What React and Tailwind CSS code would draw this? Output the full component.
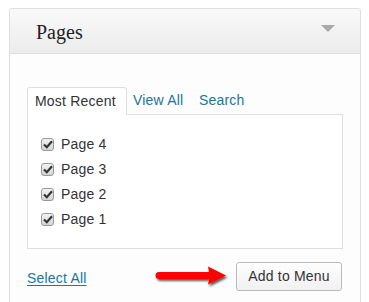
export default function App() {
  const pages = ["Page 4", "Page 3", "Page 2", "Page 1"];

  return (
    <div className="w-[369px] h-[302px] bg-white overflow-hidden pt-[8px] pl-[9px]" style={{ fontFamily: "'Liberation Sans', Arial, sans-serif" }}>
      <div className="w-[352px] h-[300px] border border-[#dfdfdf] rounded-t-[3px] bg-[#fdfdfd]">
        {/* header */}
        <div className="h-[45px] flex items-center justify-between pl-[26px] pr-[25px] border-b border-[#dfdfdf] bg-gradient-to-b from-[#f9f9f9] to-[#ececec] rounded-t-[3px]">
          <span className="text-[20px] text-[#222] pt-[2px]" style={{ fontFamily: "'Liberation Serif', Georgia, serif" }}>
            Pages
          </span>
          <svg width="14" height="8" viewBox="0 0 14 8" className="mb-[5px]">
            <polygon points="0,0 14,0 7,7" fill="#aaaaaa" />
          </svg>
        </div>

        <div className="px-[17px] pt-[32px]">
          {/* tabs */}
          <div className="flex items-end text-[14px] h-[28px]">
            <div className="w-[100px] h-[28px] pl-[7px] flex items-center border border-b-0 border-[#dfdfdf] bg-white rounded-t-[3px] text-[#333] relative top-[1px] tracking-[0.2px]">
              Most Recent
            </div>
            <a className="ml-[6px] w-[60px] h-[27px] flex items-center text-[#21759b] tracking-[0.2px]">View All</a>
            <a className="ml-[6px] h-[27px] flex items-center text-[#21759b] tracking-[0.2px]">Search</a>
          </div>
          {/* list box */}
          <div className="w-[316px] h-[135px] border border-[#dfdfdf] bg-white pt-[22px] pl-[13px] flex flex-col gap-[11px]">
            {pages.map((p) => (
              <label key={p} className="flex items-center gap-[6px] text-[14px] text-[#333] h-[14px]">
                <span className="w-[13px] h-[13px] rounded-[3px] border border-[#999] bg-gradient-to-b from-[#f2f2f2] to-[#d4d4d4] flex items-center justify-center">
                  <svg width="10" height="9" viewBox="0 0 10 9">
                    <path d="M1 4.5 L3.8 7.2 L9 1.2" fill="none" stroke="#333" strokeWidth="2.2" />
                  </svg>
                </span>
                <span className="ml-[1px] tracking-[0.2px]">{p}</span>
              </label>
            ))}
          </div>

          {/* footer */}
          <div className="flex items-center justify-between mt-[13px] pr-[1px]">
            <a className="text-[14px] text-[#21759b] underline underline-offset-2 mt-[4px] tracking-[0.2px]">Select All</a>
            <div className="flex items-center gap-[7px]">
              <svg width="74" height="24" viewBox="0 0 74 24">
                <defs>
                  <filter id="sh" x="-10%" y="-30%" width="130%" height="180%">
                    <feDropShadow dx="1.5" dy="2" stdDeviation="1.2" floodColor="#000" floodOpacity="0.65" />
                  </filter>
                </defs>
                <path
                  d="M4 7 L54 7 Q53.5 4 53 1.5 L71 10.5 L53 19.5 Q53.5 17 54 14 L4 14 Q0.5 13.8 0.5 10.5 Q0.5 7.2 4 7 Z"
                  fill="#ff0000"
                  filter="url(#sh)"
                />
              </svg>
              <button className="w-[106px] h-[29px] border border-[#bbb] rounded-[3px] bg-gradient-to-b from-[#fefefe] to-[#f1f1f1] text-[14px] text-[#333] tracking-[0.2px]">
                Add to Menu
              </button>
            </div>
          </div>
        </div>
      </div>
    </div>
  );
}
